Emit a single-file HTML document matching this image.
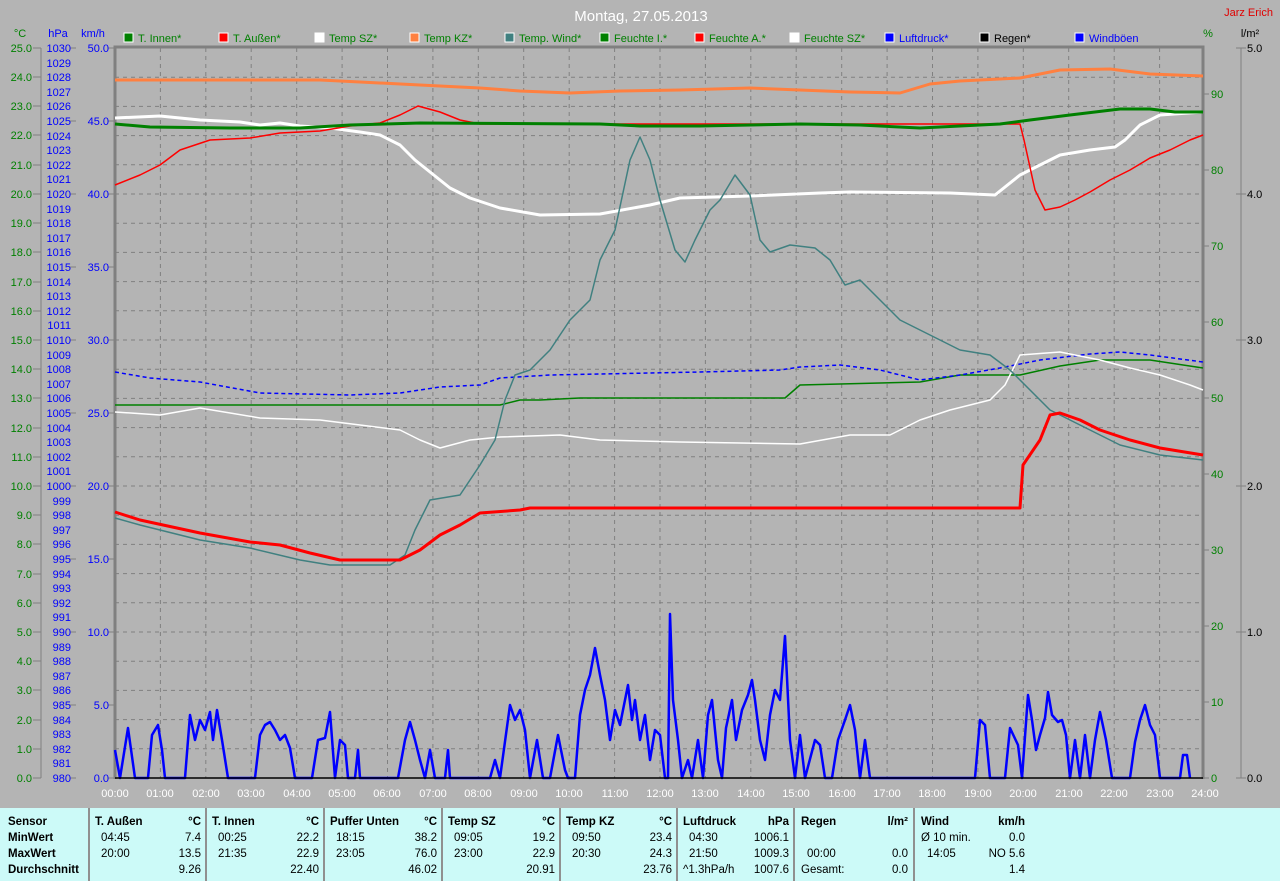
<!DOCTYPE html>
<html><head><meta charset="utf-8"><style>
html,body{margin:0;padding:0;width:1280px;height:881px;overflow:hidden;background:#b4b4b4;font-family:"Liberation Sans",sans-serif}
svg{position:absolute;left:0;top:0}
#tbl{position:absolute;left:0;top:808px;width:1280px;height:73px;background:#ccfaf8;font-size:11.5px;color:#000}
.col{position:absolute;top:0;height:73px;border-left:2px solid #909090}
.r{position:absolute;white-space:nowrap}
.b{font-weight:bold}
</style></head><body>
<svg width="1280" height="808" font-family="Liberation Sans, sans-serif" font-size="11">
<text x="641" y="21" fill="#fff" font-size="15" text-anchor="middle">Montag, 27.05.2013</text>
<text x="1273" y="16" fill="#e00000" font-size="11" text-anchor="end">Jarz Erich</text>
<!-- legend -->
<g font-size="11">
<rect x="124" y="33" width="9" height="9" fill="#008000" stroke="#fff"/><text x="138" y="42" fill="#008000">T. Innen*</text>
<rect x="219" y="33" width="9" height="9" fill="#ff0000" stroke="#fff"/><text x="233" y="42" fill="#008000">T. Außen*</text>
<rect x="315" y="33" width="9" height="9" fill="#fff" stroke="#fff"/><text x="329" y="42" fill="#008000">Temp SZ*</text>
<rect x="410" y="33" width="9" height="9" fill="#ff8040" stroke="#fff"/><text x="424" y="42" fill="#008000">Temp KZ*</text>
<rect x="505" y="33" width="9" height="9" fill="#408080" stroke="#fff"/><text x="519" y="42" fill="#008000">Temp. Wind*</text>
<rect x="600" y="33" width="9" height="9" fill="#008000" stroke="#fff"/><text x="614" y="42" fill="#008000">Feuchte I.*</text>
<rect x="695" y="33" width="9" height="9" fill="#ff0000" stroke="#fff"/><text x="709" y="42" fill="#008000">Feuchte A.*</text>
<rect x="790" y="33" width="9" height="9" fill="#fff" stroke="#fff"/><text x="804" y="42" fill="#008000">Feuchte SZ*</text>
<rect x="885" y="33" width="9" height="9" fill="#0000ff" stroke="#fff"/><text x="899" y="42" fill="#0000ff">Luftdruck*</text>
<rect x="980" y="33" width="9" height="9" fill="#000" stroke="#fff"/><text x="994" y="42" fill="#000">Regen*</text>
<rect x="1075" y="33" width="9" height="9" fill="#0000ff" stroke="#fff"/><text x="1089" y="42" fill="#0000ff">Windböen</text>
</g>
<text x="20" y="37" fill="#008000" text-anchor="middle">°C</text>
<text x="58" y="37" fill="#0000ff" text-anchor="middle">hPa</text>
<text x="93" y="37" fill="#0000ff" text-anchor="middle">km/h</text>
<text x="1208" y="37" fill="#008000" text-anchor="middle">%</text>
<text x="1250" y="37" fill="#000" text-anchor="middle">l/m²</text>
<!-- grid -->
<g stroke="#808080" stroke-dasharray="4,4" stroke-width="1">
<path d="M115 77.2H1203M115 106.4H1203M115 135.6H1203M115 164.8H1203M115 194H1203M115 223.2H1203M115 252.4H1203M115 281.6H1203M115 310.8H1203M115 340H1203M115 369.2H1203M115 398.4H1203M115 427.6H1203M115 456.8H1203M115 486H1203M115 515.2H1203M115 544.4H1203M115 573.6H1203M115 602.8H1203M115 632H1203M115 661.2H1203M115 690.4H1203M115 719.6H1203M115 748.8H1203"/>
<path d="M160.4 48V778M205.8 48V778M251.2 48V778M296.7 48V778M342.1 48V778M387.5 48V778M432.9 48V778M478.3 48V778M523.7 48V778M569.2 48V778M614.6 48V778M660 48V778M705.4 48V778M750.8 48V778M796.2 48V778M841.7 48V778M887.1 48V778M932.5 48V778M977.9 48V778M1023.3 48V778M1068.7 48V778M1114.2 48V778M1159.6 48V778"/>
</g>
<path d="M115 779V47H1203V779" fill="none" stroke="#808080" stroke-width="3"/>
<!-- axes -->
<path d="M41 48V778M1241 48V778" stroke="#808080" stroke-width="1"/>
<g stroke="#808080"><path d="M33 48h8M33 77h8M33 106h8M33 135h8M33 165h8M33 194h8M33 223h8M33 252h8M33 282h8M33 311h8M33 340h8M33 369h8M33 398h8M33 428h8M33 457h8M33 486h8M33 515h8M33 544h8M33 574h8M33 603h8M33 632h8M33 661h8M33 690h8M33 720h8M33 749h8M33 778h8"/>
<path d="M70 48h6M70 121h6M70 194h6M70 267h6M70 340h6M70 413h6M70 486h6M70 559h6M70 632h6M70 705h6M70 778h6"/>
<path d="M108 48h7M108 121h7M108 194h7M108 267h7M108 340h7M108 413h7M108 486h7M108 559h7M108 632h7M108 705h7M108 778h7"/>
<path d="M1204 94h5M1204 170h5M1204 246h5M1204 322h5M1204 398h5M1204 474h5M1204 550h5M1204 626h5M1204 702h5M1204 778h5"/>
<path d="M1236 48h10M1236 194h10M1236 340h10M1236 486h10M1236 632h10M1236 778h10"/></g>
<g fill="#008000" text-anchor="end">
<text x="32" y="52">25.0</text><text x="32" y="81">24.0</text><text x="32" y="110">23.0</text><text x="32" y="139">22.0</text><text x="32" y="169">21.0</text><text x="32" y="198">20.0</text><text x="32" y="227">19.0</text><text x="32" y="256">18.0</text><text x="32" y="286">17.0</text><text x="32" y="315">16.0</text><text x="32" y="344">15.0</text><text x="32" y="373">14.0</text><text x="32" y="402">13.0</text><text x="32" y="432">12.0</text><text x="32" y="461">11.0</text><text x="32" y="490">10.0</text><text x="32" y="519">9.0</text><text x="32" y="548">8.0</text><text x="32" y="578">7.0</text><text x="32" y="607">6.0</text><text x="32" y="636">5.0</text><text x="32" y="665">4.0</text><text x="32" y="694">3.0</text><text x="32" y="724">2.0</text><text x="32" y="753">1.0</text><text x="32" y="782">0.0</text>
</g>
<g fill="#0000ff" text-anchor="end">
<text x="71" y="52">1030</text><text x="71" y="67">1029</text><text x="71" y="81">1028</text><text x="71" y="96">1027</text><text x="71" y="110">1026</text><text x="71" y="125">1025</text><text x="71" y="140">1024</text><text x="71" y="154">1023</text><text x="71" y="169">1022</text><text x="71" y="183">1021</text><text x="71" y="198">1020</text><text x="71" y="213">1019</text><text x="71" y="227">1018</text><text x="71" y="242">1017</text><text x="71" y="256">1016</text><text x="71" y="271">1015</text><text x="71" y="286">1014</text><text x="71" y="300">1013</text><text x="71" y="315">1012</text><text x="71" y="329">1011</text><text x="71" y="344">1010</text><text x="71" y="359">1009</text><text x="71" y="373">1008</text><text x="71" y="388">1007</text><text x="71" y="402">1006</text><text x="71" y="417">1005</text><text x="71" y="432">1004</text><text x="71" y="446">1003</text><text x="71" y="461">1002</text><text x="71" y="475">1001</text><text x="71" y="490">1000</text><text x="71" y="505">999</text><text x="71" y="519">998</text><text x="71" y="534">997</text><text x="71" y="548">996</text><text x="71" y="563">995</text><text x="71" y="578">994</text><text x="71" y="592">993</text><text x="71" y="607">992</text><text x="71" y="621">991</text><text x="71" y="636">990</text><text x="71" y="651">989</text><text x="71" y="665">988</text><text x="71" y="680">987</text><text x="71" y="694">986</text><text x="71" y="709">985</text><text x="71" y="724">984</text><text x="71" y="738">983</text><text x="71" y="753">982</text><text x="71" y="767">981</text><text x="71" y="782">980</text>
<text x="109" y="52">50.0</text><text x="109" y="125">45.0</text><text x="109" y="198">40.0</text><text x="109" y="271">35.0</text><text x="109" y="344">30.0</text><text x="109" y="417">25.0</text><text x="109" y="490">20.0</text><text x="109" y="563">15.0</text><text x="109" y="636">10.0</text><text x="109" y="709">5.0</text><text x="109" y="782">0.0</text>
</g>
<g fill="#008000"><text x="1211" y="98">90</text><text x="1211" y="174">80</text><text x="1211" y="250">70</text><text x="1211" y="326">60</text><text x="1211" y="402">50</text><text x="1211" y="478">40</text><text x="1211" y="554">30</text><text x="1211" y="630">20</text><text x="1211" y="706">10</text><text x="1211" y="782">0</text></g>
<g fill="#000"><text x="1247" y="52">5.0</text><text x="1247" y="198">4.0</text><text x="1247" y="344">3.0</text><text x="1247" y="490">2.0</text><text x="1247" y="636">1.0</text><text x="1247" y="782">0.0</text></g>
<g fill="#fff" text-anchor="middle"><text x="115" y="797">00:00</text><text x="160" y="797">01:00</text><text x="206" y="797">02:00</text><text x="251" y="797">03:00</text><text x="297" y="797">04:00</text><text x="342" y="797">05:00</text><text x="387" y="797">06:00</text><text x="433" y="797">07:00</text><text x="478" y="797">08:00</text><text x="524" y="797">09:00</text><text x="569" y="797">10:00</text><text x="615" y="797">11:00</text><text x="660" y="797">12:00</text><text x="705" y="797">13:00</text><text x="751" y="797">14:00</text><text x="796" y="797">15:00</text><text x="842" y="797">16:00</text><text x="887" y="797">17:00</text><text x="932" y="797">18:00</text><text x="978" y="797">19:00</text><text x="1023" y="797">20:00</text><text x="1069" y="797">21:00</text><text x="1114" y="797">22:00</text><text x="1160" y="797">23:00</text><text x="1205" y="797">24:00</text></g>
<!-- series -->
<g fill="none" stroke-linejoin="round">
<polyline stroke="#ff8040" stroke-width="3" points="115,80 320,80 360,82 420,85 480,88 520,91 570,93 620,91 680,90 750,88 800,90 850,92 900,93 930,84 960,81 1020,78 1060,70 1110,69 1150,74 1203,76"/>
<polyline stroke="#fff" stroke-width="3" points="115,118 160,116 200,120 240,122 260,125 280,123 300,126 330,128 360,132 380,135 400,145 415,160 430,172 450,188 470,198 500,208 540,215 600,214 650,205 680,198 750,196 820,193 850,192 950,193 995,195 1020,175 1060,155 1090,150 1115,147 1125,140 1140,125 1160,115 1203,112"/>
<polyline stroke="#ff0000" stroke-width="1.5" points="115,185 140,175 160,165 180,150 210,140 250,138 280,133 320,131 350,126 380,123 400,115 418,106 440,112 460,120 480,124 1020,124 1024,140 1035,190 1045,210 1060,207 1075,200 1090,192 1110,180 1130,170 1150,158 1170,150 1190,140 1203,135"/>
<polyline stroke="#008000" stroke-width="3" points="115,124 150,127 230,128 300,128 350,125 420,123 600,124 640,126 700,126 800,124 860,125 920,128 1000,124 1030,120 1070,115 1120,109 1150,109 1175,112 1203,112"/>
<polyline stroke="#008000" stroke-width="1.5" points="115,405 500,405 520,400 540,400 580,398 785,398 800,385 920,382 960,375 1020,375 1060,366 1100,360 1150,360 1203,368"/>
<polyline stroke="#0000ff" stroke-width="1.5" stroke-dasharray="4,3" points="115,372 150,378 200,382 260,393 350,395 400,393 440,387 480,385 500,378 550,375 700,372 780,370 800,367 840,365 880,370 920,380 960,375 1000,368 1040,360 1090,354 1120,352 1150,355 1203,362"/>
<polyline stroke="#fff" stroke-width="1.5" points="115,412 160,415 200,408 260,418 320,420 360,425 400,430 420,440 440,448 470,440 500,437 560,435 600,440 680,442 800,444 850,435 890,435 920,420 950,410 990,400 1005,385 1020,355 1060,352 1100,360 1130,368 1160,375 1190,385 1203,390"/>
<polyline stroke="#408080" stroke-width="1.5" points="115,518 140,525 200,540 250,548 300,560 330,565 390,565 405,555 415,530 430,500 460,495 480,465 495,440 505,400 515,375 530,370 550,350 570,320 590,300 600,260 615,230 630,160 640,137 650,160 660,200 675,250 685,262 695,240 710,210 720,200 735,175 750,195 760,240 770,252 790,245 815,248 830,260 845,285 860,280 880,300 900,320 930,335 960,350 990,355 1010,370 1030,390 1050,410 1080,425 1120,445 1160,455 1203,460"/>
<polyline stroke="#ff0000" stroke-width="3" points="115,512 140,520 200,533 250,542 280,545 310,553 340,560 400,560 420,550 440,535 460,525 480,513 520,510 530,508 1020,508 1023,465 1040,440 1050,415 1060,413 1080,420 1100,430 1130,440 1160,448 1203,455"/>
<polyline stroke="#0000ff" stroke-width="2.5" points="115,750 120,778 128,728 135,778 148,778 152,735 158,725 162,750 165,778 185,778 190,715 195,740 200,720 205,730 210,712 213,740 217,710 222,740 228,778 255,778 260,735 265,725 270,722 275,730 280,740 285,735 290,748 295,778 312,778 318,740 325,738 330,712 335,778 340,740 345,745 348,778 355,778 358,750 360,778 398,778 405,740 410,722 415,740 420,760 425,778 430,750 435,778 445,778 448,750 450,778 490,778 495,760 500,778 510,705 515,720 520,710 525,730 530,778 537,740 543,778 550,778 558,735 565,770 568,778 575,778 580,715 585,690 590,675 595,648 600,675 605,700 610,740 615,710 620,725 625,700 628,685 632,720 635,700 640,740 645,715 650,760 655,730 660,735 665,778 668,778 670,614 673,700 678,740 682,778 688,760 692,778 698,740 703,778 708,715 712,700 718,760 722,778 726,728 732,700 736,740 742,710 748,695 752,680 755,700 760,740 765,760 770,715 775,690 780,700 785,636 790,740 795,778 800,735 805,778 815,740 820,745 825,778 832,778 838,740 845,720 850,705 855,730 860,778 865,740 870,778 975,778 980,720 985,725 990,778 1005,778 1010,728 1018,745 1022,778 1028,695 1032,720 1036,750 1040,735 1045,718 1048,692 1052,715 1058,722 1062,720 1066,735 1070,778 1075,740 1080,778 1085,735 1090,778 1095,740 1100,712 1106,740 1112,778 1130,778 1135,742 1140,720 1145,705 1150,725 1155,735 1160,778 1180,778 1183,755 1187,755 1190,778"/>
</g>
<path d="M115 778H1203" stroke="#000" stroke-width="1.5"/>
</svg>
<div id="tbl">
<div class="r b" style="left:8px;top:8px">Sensor</div><div class="r b" style="left:8px;top:24px">MinWert</div><div class="r b" style="left:8px;top:40px">MaxWert</div><div class="r b" style="left:8px;top:56px">Durchschnitt</div>
<div class="col" style="left:88px;width:117px"><div class="r b" style="left:5px;top:8px">T. Außen</div><div class="r b" style="right:6px;top:8px">°C</div><div class="r" style="left:11px;top:24px">04:45</div><div class="r" style="right:6px;top:24px">7.4</div><div class="r" style="left:11px;top:40px">20:00</div><div class="r" style="right:6px;top:40px">13.5</div><div class="r" style="right:6px;top:56px">9.26</div></div>
<div class="col" style="left:205px;width:118px"><div class="r b" style="left:5px;top:8px">T. Innen</div><div class="r b" style="right:6px;top:8px">°C</div><div class="r" style="left:11px;top:24px">00:25</div><div class="r" style="right:6px;top:24px">22.2</div><div class="r" style="left:11px;top:40px">21:35</div><div class="r" style="right:6px;top:40px">22.9</div><div class="r" style="right:6px;top:56px">22.40</div></div>
<div class="col" style="left:323px;width:118px"><div class="r b" style="left:5px;top:8px">Puffer Unten</div><div class="r b" style="right:6px;top:8px">°C</div><div class="r" style="left:11px;top:24px">18:15</div><div class="r" style="right:6px;top:24px">38.2</div><div class="r" style="left:11px;top:40px">23:05</div><div class="r" style="right:6px;top:40px">76.0</div><div class="r" style="right:6px;top:56px">46.02</div></div>
<div class="col" style="left:441px;width:118px"><div class="r b" style="left:5px;top:8px">Temp SZ</div><div class="r b" style="right:6px;top:8px">°C</div><div class="r" style="left:11px;top:24px">09:05</div><div class="r" style="right:6px;top:24px">19.2</div><div class="r" style="left:11px;top:40px">23:00</div><div class="r" style="right:6px;top:40px">22.9</div><div class="r" style="right:6px;top:56px">20.91</div></div>
<div class="col" style="left:559px;width:117px"><div class="r b" style="left:5px;top:8px">Temp KZ</div><div class="r b" style="right:6px;top:8px">°C</div><div class="r" style="left:11px;top:24px">09:50</div><div class="r" style="right:6px;top:24px">23.4</div><div class="r" style="left:11px;top:40px">20:30</div><div class="r" style="right:6px;top:40px">24.3</div><div class="r" style="right:6px;top:56px">23.76</div></div>
<div class="col" style="left:676px;width:117px"><div class="r b" style="left:5px;top:8px">Luftdruck</div><div class="r b" style="right:6px;top:8px">hPa</div><div class="r" style="left:11px;top:24px">04:30</div><div class="r" style="right:6px;top:24px">1006.1</div><div class="r" style="left:11px;top:40px">21:50</div><div class="r" style="right:6px;top:40px">1009.3</div><div class="r" style="left:5px;top:56px">^1.3hPa/h</div><div class="r" style="right:6px;top:56px">1007.6</div></div>
<div class="col" style="left:793px;width:120px"><div class="r b" style="left:6px;top:8px">Regen</div><div class="r b" style="right:7px;top:8px">l/m²</div><div class="r" style="left:12px;top:40px">00:00</div><div class="r" style="right:7px;top:40px">0.0</div><div class="r" style="left:6px;top:56px">Gesamt:</div><div class="r" style="right:7px;top:56px">0.0</div></div>
<div class="col" style="left:913px;width:110px"><div class="r b" style="left:6px;top:8px">Wind</div><div class="r b" style="right:0;top:8px">km/h</div><div class="r" style="left:6px;top:24px">Ø 10 min.</div><div class="r" style="right:0;top:24px">0.0</div><div class="r" style="left:12px;top:40px">14:05</div><div class="r" style="right:0;top:40px">NO 5.6</div><div class="r" style="right:0;top:56px">1.4</div></div>
</div>
</body></html>
